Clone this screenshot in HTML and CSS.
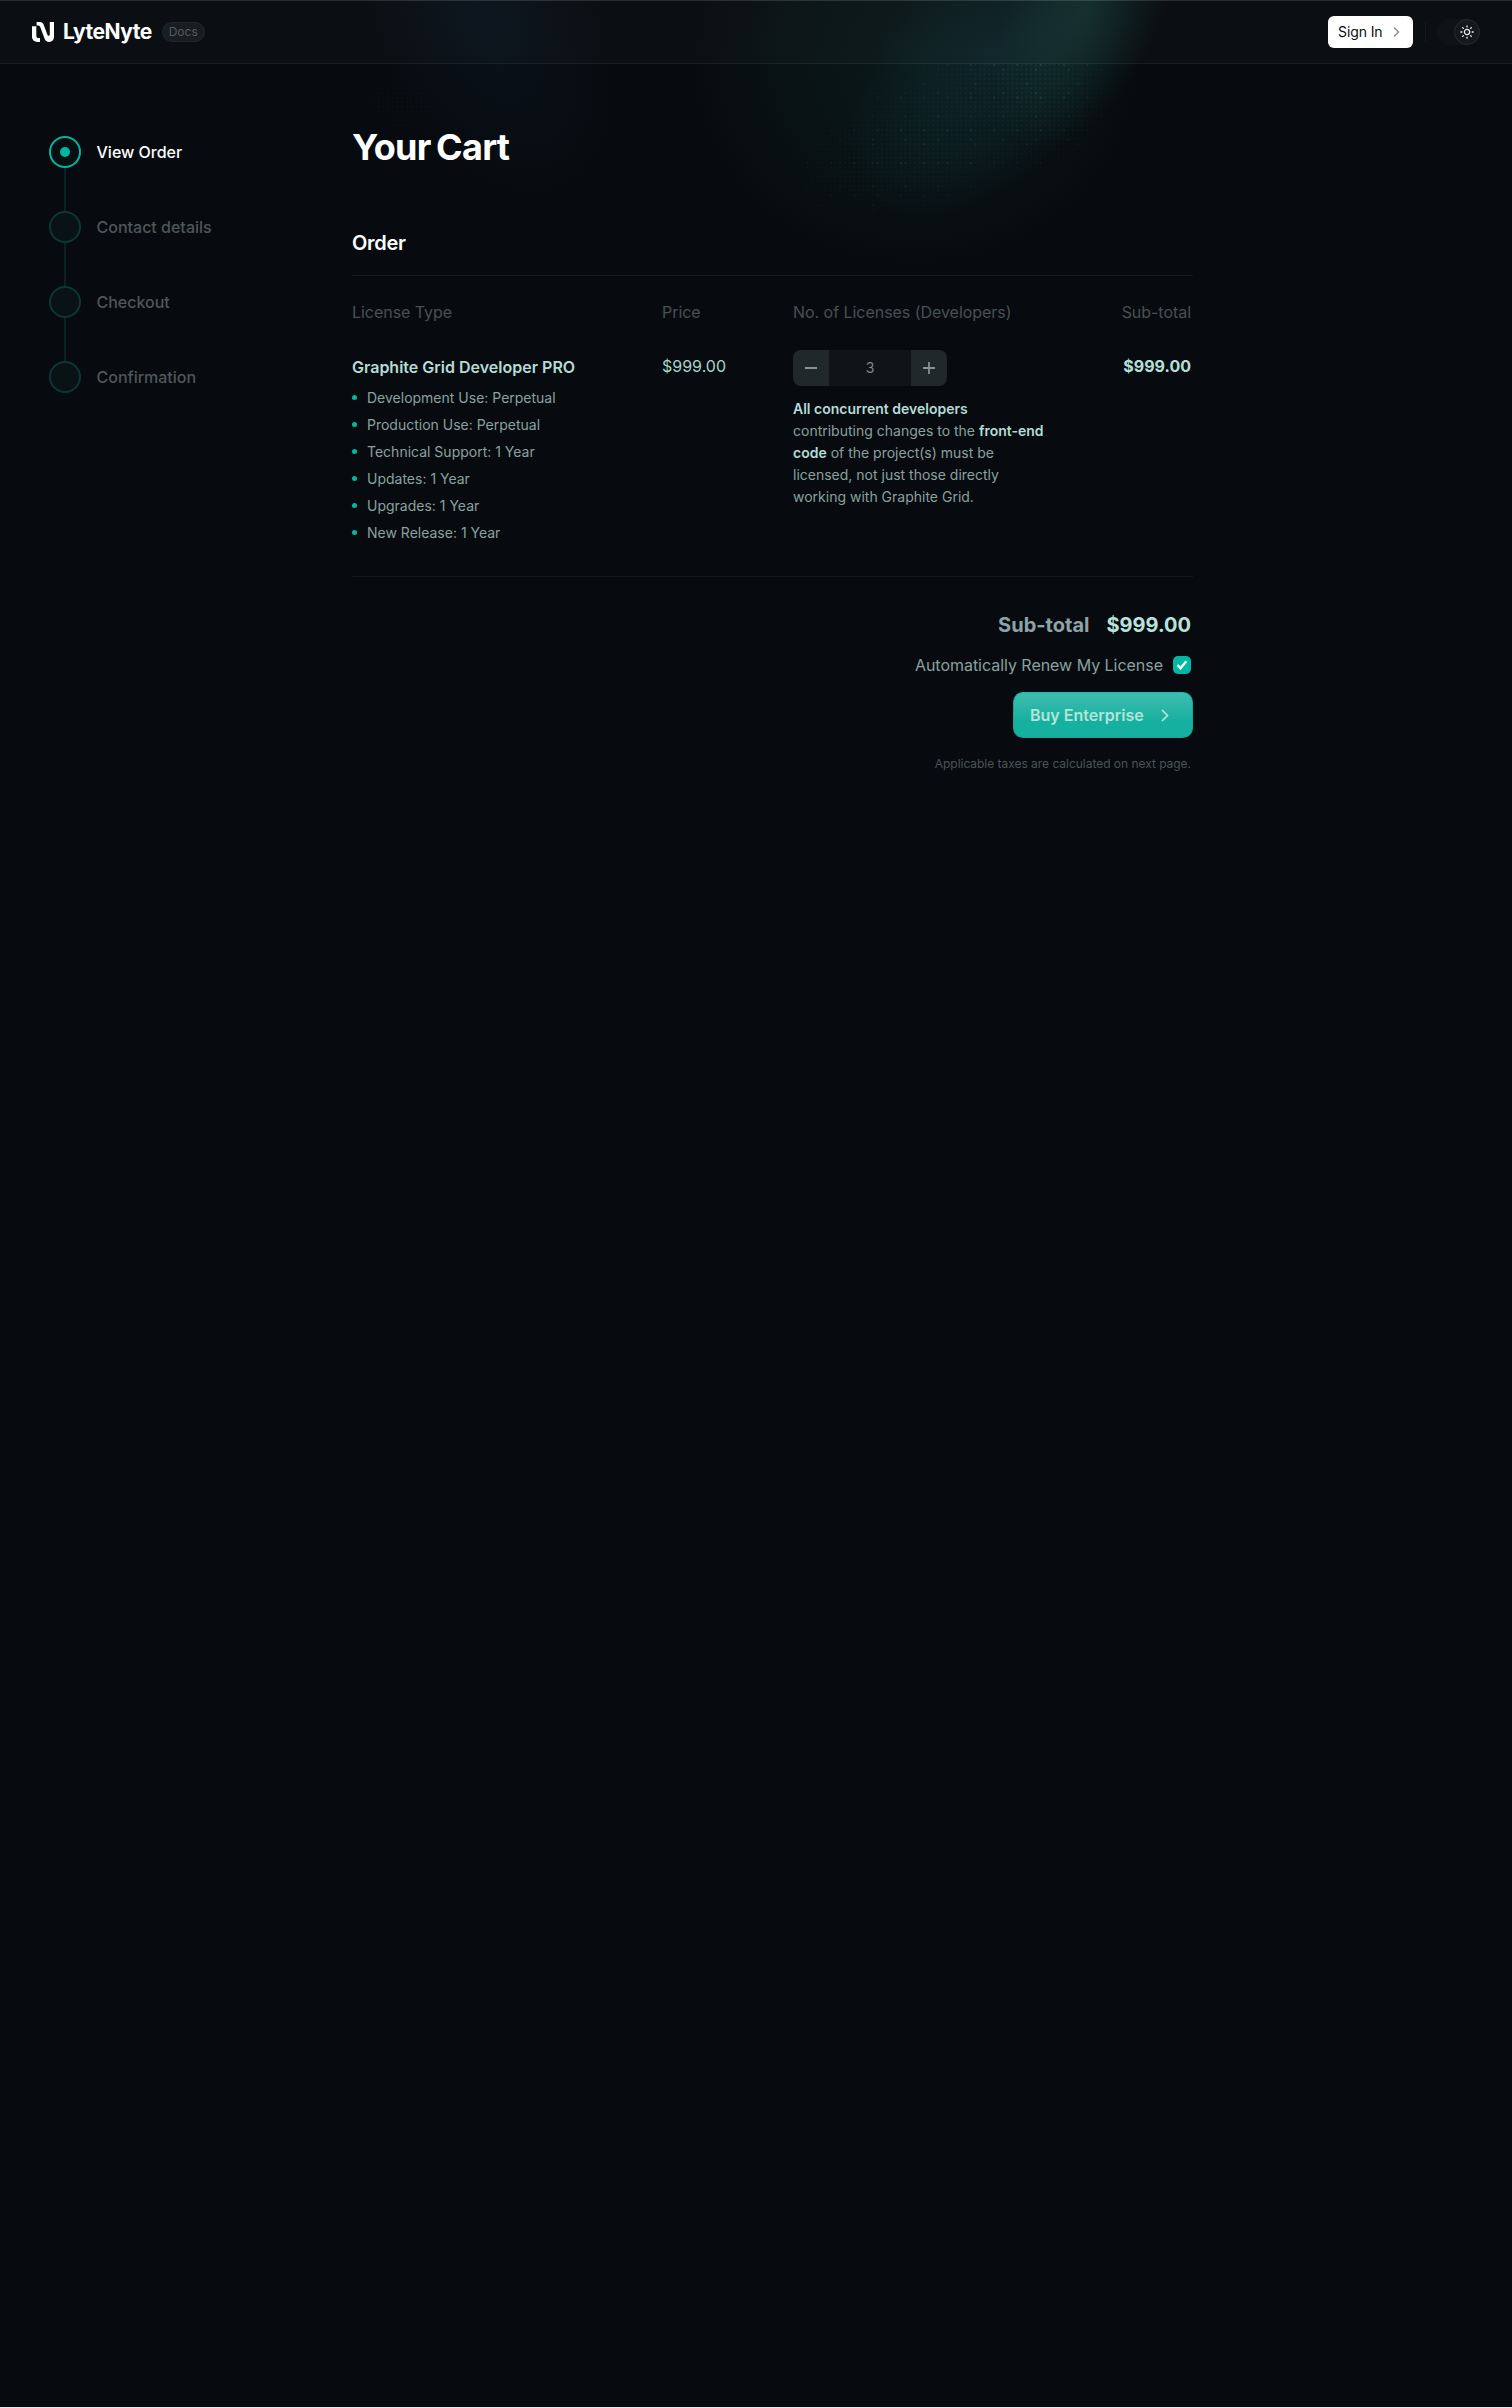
FILE: index.html
```html
<!DOCTYPE html>
<html lang="en">
<head>
<meta charset="utf-8">
<title>Your Cart – LyteNyte</title>
<link rel="stylesheet" href="styles.css">
</head>
<body>
<div class="page">
  <div class="backdrop" aria-hidden="true">
    <div class="glow glow-blue"></div>
    <div class="glow glow-haze"></div>
    <div class="glow glow-teal"></div>
    <div class="glow glow-core"></div>
    <div class="dots dots-left"></div>
    <div class="dots dots-right"></div>
  </div>

  <header class="topbar">
    <a class="brand">
      <svg class="brand-mark" viewBox="0 0 22 20" width="22" height="20" fill="#fff">
        <path d="M0 4.200h4.300v9.300c0 1.600.9 2.600 2.400 2.600H8V20H5.600C2.200 20 0 17.800 0 14.600z"/>
        <path d="M4.600 3.600V0h3.200c2 0 3.200.9 3.900 2.800l3.700 10c.5 1.400 2.400 1.100 2.400-.4V0H22v14.600c0 3.300-2 5.400-4.800 5.400-2.400 0-3.900-1.200-4.700-3.400L8.300 5.200C7.900 4.100 7.300 3.600 6.200 3.600z"/>
      </svg>
      <span class="brand-name">LyteNyte</span>
      <span class="pill">Docs</span>
    </a>
    <div class="actions">
      <a class="signin">Sign In
        <svg width="7" height="12" viewBox="0 0 7 12" fill="none" stroke="#8b9296" stroke-width="1.500"><path d="M1 1.500 5.500 6 1 10.500"/></svg>
      </a>
      <span class="separator"></span>
      <span class="toggle"><span class="knob">
        <svg width="14" height="14" viewBox="0 0 14 14" fill="none" stroke="#e8eaea" stroke-width="1.300" stroke-linecap="round"><circle cx="7" cy="7" r="2.600"/><path d="M7 .8v1.100M7 12.100v1.100M.8 7h1.100M12.100 7h1.100M2.600 2.600l.7.7M10.700 10.700l.7.7M2.600 11.400l.7-.7M10.700 3.300l.7-.7"/></svg>
      </span></span>
    </div>
  </header>

  <main class="layout">
    <ol class="steps">
      <li class="step current"><span class="node"></span>View Order</li>
      <li class="step"><span class="node"></span>Contact details</li>
      <li class="step"><span class="node"></span>Checkout</li>
      <li class="step"><span class="node"></span>Confirmation</li>
    </ol>

    <section class="cart">
      <h1>Your Cart</h1>
      <h2>Order</h2>
      <div class="order-grid head">
        <span>License Type</span><span>Price</span><span>No. of Licenses (Developers)</span><span class="end">Sub-total</span>
      </div>
      <div class="order-grid line">
        <div class="license">
          <h3>Graphite Grid Developer PRO</h3>
          <ul>
            <li>Development Use: Perpetual</li>
            <li>Production Use: Perpetual</li>
            <li>Technical Support: 1 Year</li>
            <li>Updates: 1 Year</li>
            <li>Upgrades: 1 Year</li>
            <li>New Release: 1 Year</li>
          </ul>
        </div>
        <div class="price">$999.00</div>
        <div class="quantity">
          <div class="stepper">
            <button aria-label="Remove"><svg width="12" height="12" viewBox="0 0 12 12" stroke="#8a9294" stroke-width="1.800"><path d="M0 6h12"/></svg></button>
            <span class="count">3</span>
            <button aria-label="Add"><svg width="12" height="12" viewBox="0 0 12 12" stroke="#8a9294" stroke-width="1.800"><path d="M0 6h12M6 0v12"/></svg></button>
          </div>
          <p><strong>All concurrent developers</strong><br>contributing changes to the <strong>front-end<br>code</strong> of the project(s) must be<br>licensed, not just those directly<br>working with Graphite Grid.</p>
        </div>
        <div class="price total end">$999.00</div>
      </div>

      <div class="summary">
        <div class="sum"><span class="sum-label">Sub-total</span><span class="sum-value">$999.00</span></div>
        <label class="renew">Automatically Renew My License
          <span class="check"><svg width="12" height="10" viewBox="0 0 12 10" fill="none" stroke="#fff" stroke-width="2.400"><path d="M1.500 5.200 4.500 8.200 10.300 1.200"/></svg></span>
        </label>
        <button class="buy">Buy Enterprise
          <svg width="8" height="13" viewBox="0 0 8 13" fill="none" stroke="#b9e6dd" stroke-width="1.700"><path d="M1 1 6.500 6.500 1 12"/></svg>
        </button>
        <small>Applicable taxes are calculated on next page.</small>
      </div>
    </section>
  </main>
</div>
</body>
</html>
```
FILE: styles.css
```css
* { box-sizing: border-box; margin: 0; padding: 0; }
body {
  background: #070b0f;
  color: #fff;
  font-family: Inter, "Liberation Sans", sans-serif;
}
.page {
  position: relative;
  height: 2408px;
  overflow: hidden;
  border-bottom: 1px solid #e4e6e8;
}

/* Ambient light behind the header and title */
.backdrop { position: absolute; inset: 0 0 auto; height: 290px; }
.glow { position: absolute; border-radius: 50%; }
.glow-blue {
  left: 370px; top: -180px; width: 230px; height: 390px;
  background: radial-gradient(closest-side, rgba(14, 38, 62, .26), rgba(14, 38, 62, .12) 55%, transparent);
  transform: rotate(-24deg);
}
.glow-haze {
  left: 690px; top: -150px; width: 450px; height: 415px;
  background: radial-gradient(closest-side, rgba(18, 62, 54, .24), rgba(18, 62, 54, .16) 50%, transparent);
}
.glow-teal {
  left: 885px; top: -125px; width: 215px; height: 370px;
  background: radial-gradient(closest-side, rgba(22, 66, 76, .32), rgba(22, 66, 76, .19) 50%, transparent);
  transform: rotate(40deg);
}
.glow-core {
  left: 1010px; top: -140px; width: 150px; height: 300px;
  background: radial-gradient(closest-side, rgba(34, 96, 86, .3), rgba(34, 96, 86, .17) 50%, transparent);
  transform: rotate(24deg);
}

/* Fine dot matrix: an even faint grid with sparse brighter cells */
.dots { position: absolute; }
.dots-left {
  left: 350px; top: 64px; width: 110px; height: 80px;
  opacity: .14;
  background: radial-gradient(circle at 1px 1px, rgba(80, 180, 165, .26) 1px, transparent 1.400px) 0 0 / 4.667px 4.667px;
  -webkit-mask: radial-gradient(closest-side, #000, transparent);
  mask: radial-gradient(closest-side, #000, transparent);
}
.dots-right {
  left: 760px; top: 64px; width: 350px; height: 160px;
  opacity: .26;
  background-image:
    radial-gradient(circle at 1px 1px, rgba(90, 200, 185, .6) 1px, transparent 1.400px),
    radial-gradient(circle at 15px 5.667px, rgba(90, 200, 185, .5) 1px, transparent 1.400px),
    radial-gradient(circle at 10.333px 19.667px, rgba(90, 200, 185, .5) 1px, transparent 1.400px),
    radial-gradient(circle at 1px 1px, rgba(80, 180, 165, .3) 1px, transparent 1.400px);
  background-size: 23.333px 32.667px, 32.667px 23.333px, 51.333px 60.667px, 4.667px 4.667px;
  -webkit-mask:
    radial-gradient(circle 105px at 265px 20px, #000 20%, transparent),
    radial-gradient(circle 90px at 165px 75px, rgba(0, 0, 0, .8), transparent),
    radial-gradient(circle 75px at 90px 105px, rgba(0, 0, 0, .5), transparent);
  mask:
    radial-gradient(circle 105px at 265px 20px, #000 20%, transparent),
    radial-gradient(circle 90px at 165px 75px, rgba(0, 0, 0, .8), transparent),
    radial-gradient(circle 75px at 90px 105px, rgba(0, 0, 0, .5), transparent);
}

.topbar {
  position: relative;
  height: 64px;
  padding: 0 32px;
  display: flex;
  align-items: center;
  justify-content: space-between;
  background: rgba(255, 255, 255, .02);
  border-top: 1px solid rgba(255, 255, 255, .13);
  border-bottom: 1px solid rgba(255, 255, 255, .06);
}
.brand { display: flex; align-items: center; }
.brand-name { margin-left: 9px; font-size: 21px; font-weight: 700; line-height: 24px; letter-spacing: -.5px; }
.pill {
  margin-left: 10px; height: 20px; padding: 0 6px;
  border: 1px solid #20272a; border-radius: 10px; background: #171d20;
  color: #555c5f; font-size: 12px; line-height: 18px;
}
.actions { display: flex; align-items: center; }
.signin {
  width: 85px; height: 32px; padding: 0 13px 0 10px;
  display: flex; align-items: center; justify-content: space-between;
  border-radius: 6px; background: #fff; color: #0a0d10;
  font-size: 14px; line-height: 20px; letter-spacing: -.1px;
}
.separator { width: 1px; height: 20px; margin: 0 11px 0 12px; background: #14191c; }
.toggle {
  width: 43px; height: 26px; border-radius: 13px; background: #0e1316;
  display: flex; justify-content: flex-end;
}
.knob {
  width: 26px; height: 26px; border: 1px solid #262c2f; border-radius: 50%; background: #14191c;
  display: grid; place-items: center;
}

.layout {
  position: relative;
  display: grid;
  grid-template-columns: 303px 841px;
  padding: 63px 0 0 49px;
}
.steps { list-style: none; padding-top: 9px; }
.step {
  display: flex; align-items: flex-start; gap: 15.500px; height: 75px;
  color: #4f5759; font-size: 16px; font-weight: 500; line-height: 32px;
  background: linear-gradient(#0b2222, #0b2222) 15px 32px / 2px 43px no-repeat;
}
.step:last-child { background: none; }
.node {
  width: 32px; height: 32px; border-radius: 50%;
  border: 2px solid #0b3836; background: #091214;
  display: grid; place-items: center;
}
.current { color: #fff; }
.current .node { border-color: #00b8a0; background: #070f13; }
.current .node::after { content: ""; width: 10px; height: 10px; border-radius: 50%; background: #00b8a0; }

h1 { font-size: 36px; font-weight: 700; line-height: 40px; letter-spacing: -.700px; word-spacing: -2.500px; }
h2 { margin-top: 62px; padding-bottom: 18px; border-bottom: 1px solid #13181c; font-size: 20px; font-weight: 600; line-height: 28px; letter-spacing: -.3px; }
.order-grid { display: grid; grid-template-columns: 310px 131px 1fr auto; }
.head { padding-top: 24px; color: #485053; font-size: 16px; line-height: 24px; letter-spacing: -.04px; }
.end { text-align: right; padding-right: 2px; }
.line { padding-top: 26px; height: 253px; border-bottom: 1px solid #13181c; }
.license { padding-top: 5px; }
h3 { color: #b4dcd6; font-size: 16px; font-weight: 600; line-height: 24px; }
ul { list-style: none; padding-top: 5px; color: #8ba09f; font-size: 14px; line-height: 27px; }
ul li { display: flex; align-items: center; gap: 10px; }
ul li::before { content: ""; width: 5px; height: 5px; border-radius: 50%; background: #00b8a0; }
.price { padding-top: 4px; color: #a9d3cb; font-size: 16px; line-height: 24px; }
.total { color: #b4e0dc; font-weight: 700; }
.stepper { display: flex; width: 154px; height: 36px; border-radius: 8px; overflow: hidden; background: #101418; }
.stepper button { width: 36px; border: 0; background: #20282a; display: grid; place-items: center; }
.count { flex: 1; text-align: center; color: #80888a; font-size: 14px; line-height: 36px; }
.quantity p { margin-top: 12px; color: #8ba09f; font-size: 14px; line-height: 22px; white-space: nowrap; }
.quantity strong { color: #b4dcd6; font-weight: 600; }

.summary { display: flex; flex-direction: column; align-items: flex-end; padding-top: 34px; }
.sum { display: flex; gap: 17px; padding-right: 2px; font-size: 20px; font-weight: 700; line-height: 28px; }
.sum-label { color: #8da3a5; }
.sum-value { color: #b8e2dc; }
.renew { display: flex; align-items: center; gap: 10px; margin-top: 14px; padding-right: 2px; color: #8ba09f; font-size: 16px; line-height: 24px; letter-spacing: -.03px; }
.check { width: 18px; height: 18px; border-radius: 5px; background: #00b8a5; display: grid; place-items: center; }
.buy {
  width: 180px; height: 46px; margin-top: 15px; padding: 0 23px 0 16px;
  display: flex; align-items: center; justify-content: space-between;
  border: 1px solid #12a698; border-top-color: #1dbba9; border-radius: 10px;
  background: linear-gradient(#3fbdae, #15b09f 65%, #15b09f);
  color: #b5e3da; font: 600 16px/24px Inter, sans-serif;
}
small { margin-top: 18px; padding-right: 2px; color: #4b5457; font-size: 12px; line-height: 16px; letter-spacing: -.03px; }
```
